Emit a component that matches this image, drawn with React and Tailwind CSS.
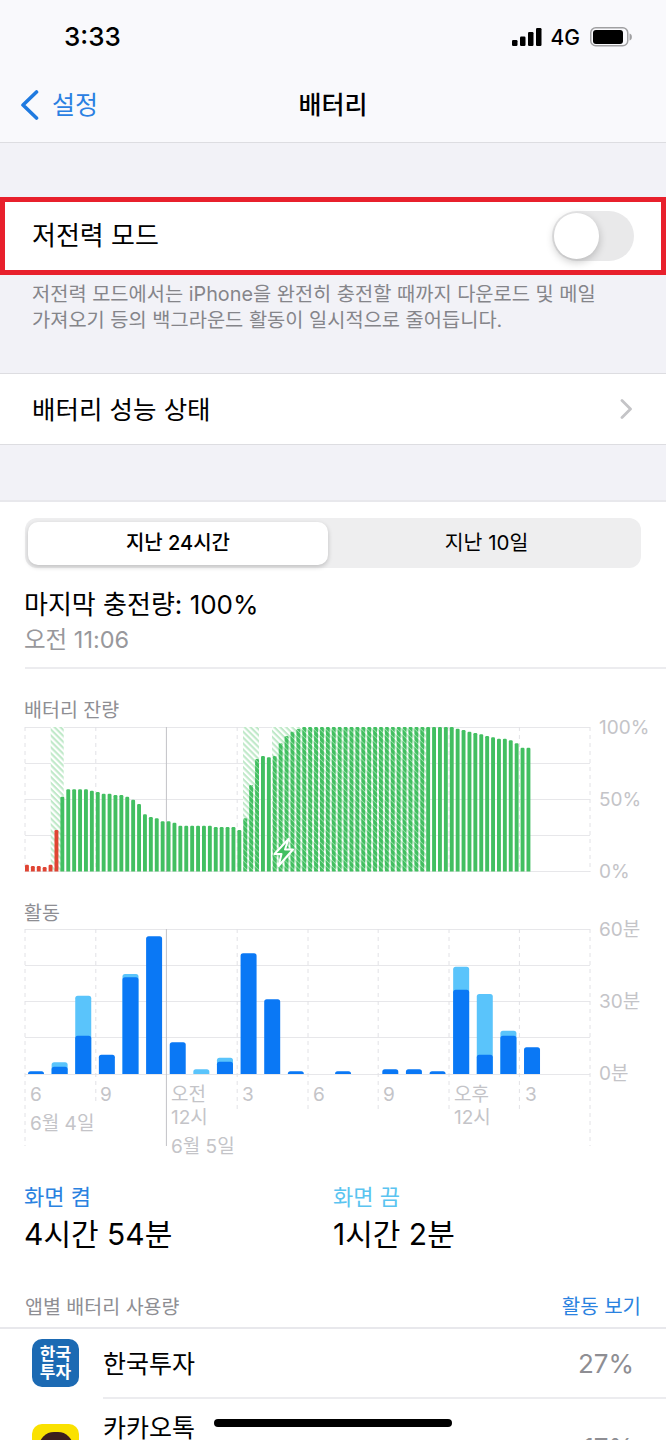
import React from 'react';

const FONT = "font-['Inter','Noto_Sans_CJK_KR',sans-serif]";

// x of the hour gridlines, shared by both charts
const HOUR_X = [25, 95.8, 166.4, 237.2, 308, 378.2, 449, 519.4, 590];

// top of each battery bar in page pixels (baseline is 871)
const BATTERY_TOPS = [
  864.7, 866, 866, 867, 864.7, 830, 796.7, 789.3, 789.3, 789.3, 789.3, 790.7, 792, 793.7, 793.7, 795, 795, 796.7,
  799.7, 804, 814.3, 817, 818.3, 821.3, 821.3, 822.7, 825.7, 825.7, 825.7, 825.7, 825.7, 825.7, 827, 827, 827, 827,
  830, 818.3, 785, 759, 756, 757.3, 756, 743.3, 736, 731.7, 729, 727, 727, 727, 727, 727, 727, 727, 727, 727, 727,
  727, 727, 727, 727, 727, 727, 727, 727, 727, 727, 727, 727, 727, 727, 727, 727, 728.7, 730, 731.7, 733, 734.3,
  736, 737.3, 738.7, 738.7, 740.3, 743.3, 747.7, 747.7,
];

// minutes drawn in page pixels: [top of dark bar, top of light bar]
const ACTIVITY = [
  [1071.3, null], [1066.7, 1062.3], [1035.7, 995.7], [1054.7, null], [977.3, 974], [936.3, null],
  [1042.3, null], [null, 1069.3], [1061.7, 1057.7], [953.3, null], [999.3, null], [1071.3, null],
  [null, null], [1071.3, null], [null, null], [1069.3, null], [1069.3, null], [1071.3, null],
  [989.7, 966.7], [1054.7, 994], [1035.7, 1030.7], [1047.3, null],
];

const topRounded = (x, y, w, bottom, r) =>
  `M${x} ${bottom}V${y + r}Q${x} ${y} ${x + r} ${y}H${x + w - r}Q${x + w} ${y} ${x + w} ${y + r}V${bottom}Z`;

const isCharging = (i) => (i >= 37 && i <= 39) || (i >= 42 && i <= 67);

const BatteryChart = () => (
  <svg className="block" width="666" height="155" viewBox="0 721 666 155">
    <defs>
      <pattern id="hatchBg" width="4.2" height="4.2" patternUnits="userSpaceOnUse" patternTransform="rotate(-45)">
        <rect width="4.2" height="4.2" fill="#c0e9c9" />
        <rect width="2.1" height="4.2" fill="#ffffff" />
      </pattern>
      <pattern id="hatchBar" width="4.2" height="4.2" patternUnits="userSpaceOnUse" patternTransform="rotate(-45)">
        <rect width="4.2" height="4.2" fill="#42bf61" />
        <rect width="0.7" height="4.2" fill="#a5e2b3" />
      </pattern>
    </defs>
    {[727, 763, 799, 835, 871].map((y) => (
      <line key={y} x1="25" x2="590" y1={y + 0.5} y2={y + 0.5} stroke="#e7e7ea" />
    ))}
    {HOUR_X.map((x, i) => (
      <line
        key={x}
        x1={x}
        x2={x}
        y1="727"
        y2="872"
        stroke={i === 2 ? '#c2c2c6' : '#e2e2e6'}
        strokeDasharray={i === 2 ? undefined : '4 4'}
      />
    ))}
    <rect x="50.7" y="727" width="13" height="144" fill="url(#hatchBg)" />
    <rect x="243" y="727" width="16" height="144" fill="url(#hatchBg)" />
    <rect x="272" y="727" width="154" height="144" fill="url(#hatchBg)" />
    {BATTERY_TOPS.map((top, i) => (
      <path
        key={i}
        d={topRounded(25 + i * 5.9, top, 3.9, 871.5, 1.2)}
        fill={i < 6 ? '#e04433' : isCharging(i) ? 'url(#hatchBar)' : '#42bf61'}
      />
    ))}
    <path
      d="M288.5 839 L274.5 854 L281.5 854 L278.5 866 L293 849.5 L285 849.5 Z"
      fill="#42bf61"
      stroke="#ffffff"
      strokeWidth="2"
      strokeLinejoin="round"
    />
  </svg>
);

const ActivityChart = () => (
  <svg className="block" width="666" height="226" viewBox="0 924 666 226">
    {[929, 965, 1001, 1037, 1074].map((y) => (
      <line key={y} x1="25" x2="590" y1={y + 0.5} y2={y + 0.5} stroke="#e7e7ea" />
    ))}
    {HOUR_X.map((x, i) => (
      <line
        key={x}
        x1={x}
        x2={x}
        y1="929"
        y2={i === 0 || i === 2 || i === 8 ? 1146 : i === 1 ? 1105 : 1110}
        stroke={i === 2 ? '#c2c2c6' : '#e2e2e6'}
        strokeDasharray={i === 2 ? undefined : '4 4'}
      />
    ))}
    {ACTIVITY.map(([dark, light], i) => {
      const x = 28 + i * 23.62;
      return (
        <g key={i}>
          {light && <path d={topRounded(x, light, 16, 1074, 2.5)} fill="#5ac4fb" />}
          {dark && <path d={topRounded(x, dark, 16, 1074, 2.5)} fill="#0a78f5" />}
        </g>
      );
    })}
  </svg>
);

const AxisLabel = ({ className, children }) => (
  <span className={`absolute text-[19px] leading-[24px] text-[#c4c4c8] whitespace-nowrap ${className}`}>{children}</span>
);

const App = () => {
  return (
    <div className={`relative h-[1440px] w-[666px] overflow-hidden bg-[#f2f2f7] text-black ${FONT}`}>
      {/* status bar + nav */}
      <header className="h-[143px] border-b border-[#dddde1] bg-[#f9f9fc]">
        <div className="flex h-[74px] items-center justify-between pl-[64px] pr-[34px]">
          <span className="text-[26px] font-medium leading-none">3:33</span>
          <div className="flex items-center">
            <svg width="30" height="18" viewBox="0 0 30 18">
              <rect x="0" y="12" width="5.5" height="6" rx="1.2" fill="#000" />
              <rect x="8" y="8.5" width="5.5" height="9.5" rx="1.2" fill="#000" />
              <rect x="16" y="4" width="5.5" height="14" rx="1.2" fill="#000" />
              <rect x="24" y="0" width="5.5" height="18" rx="1.2" fill="#000" />
            </svg>
            <span className="ml-[9px] text-[21px] font-medium leading-none">4G</span>
            <svg className="ml-[10px]" width="42" height="20" viewBox="0 0 42 20">
              <rect x="0.75" y="0.75" width="37" height="18" rx="5" fill="none" stroke="#a0a0a2" strokeWidth="1.5" />
              <rect x="3" y="3" width="30" height="14" rx="3" fill="#000" />
              <path d="M39.5 6.5c1.6.4 2.4 1.8 2.4 3.5s-.8 3.1-2.4 3.5z" fill="#a0a0a2" />
            </svg>
          </div>
        </div>
        <div className="grid h-[62px] grid-cols-3 items-center">
          <div className="flex items-center pl-[20px]">
            <svg width="19" height="30" viewBox="0 0 19 30">
              <path d="M16.5 2 L3 15 L16.5 28" fill="none" stroke="#1f7ae0" strokeWidth="3.6" strokeLinecap="round" strokeLinejoin="round" />
            </svg>
            <span className="ml-[13px] text-[25px] leading-none text-[#2a80e2]">설정</span>
          </div>
          <span className="text-center text-[25px] font-medium leading-none">배터리</span>
          <span />
        </div>
      </header>

      {/* low power mode */}
      <section className="mt-[54px]">
        <div className="flex h-[78px] items-center justify-between border-[5px] border-[#e8202c] bg-white pl-[27px] pr-[27px]">
          <span className="text-[26px] leading-none">저전력 모드</span>
          <div className="flex h-[50px] w-[82px] items-center rounded-full bg-[#e9e9ea] pl-[2px]">
            <div className="h-[46px] w-[45px] rounded-full bg-white shadow-[0_3px_8px_rgba(0,0,0,0.22)]" />
          </div>
        </div>
        <p className="px-[32px] pt-[6px] text-[19.8px] leading-[26px] text-[#85858a]">
          저전력 모드에서는 iPhone을 완전히 충전할 때까지 다운로드 및 메일
          <br />
          가져오기 등의 백그라운드 활동이 일시적으로 줄어듭니다.
        </p>
      </section>

      {/* battery health */}
      <div className="mt-[40px] flex h-[72px] items-center justify-between border-y border-[#dddde1] bg-white pl-[32px] pr-[34px]">
        <span className="pt-[2px] text-[25.5px] leading-none">배터리 성능 상태</span>
        <svg width="12" height="20" viewBox="0 0 12 20">
          <path d="M2 1.5 L10.5 10 L2 18.5" fill="none" stroke="#c4c4c7" strokeWidth="2.8" strokeLinecap="round" strokeLinejoin="round" />
        </svg>
      </div>

      {/* usage card */}
      <main className="mt-[55px] border-t-2 border-[#e8e8ec] bg-white pb-[100px]">
        <div className="pl-[25px] pt-[16px] pr-[25px]">
          <div className="flex h-[50px] items-center rounded-[12px] bg-[#eeeeef] px-[3px]">
            <div className="flex h-[43px] w-[300px] items-center justify-center rounded-[10px] bg-white text-[20px] font-medium leading-none shadow-[0_2px_5px_rgba(0,0,0,0.2)]">
              지난 24시간
            </div>
            <div className="flex h-[43px] flex-1 items-center justify-center pl-[7px] text-[20.5px] leading-none">
              지난 10일
            </div>
          </div>
        </div>

        <div className="ml-[25px] mt-[21px] border-b-2 border-[#ececef] pb-[11px]">
          <div className="-ml-px text-[26px] leading-[32px]">마지막 충전량: 100%</div>
          <div className="-ml-px mt-[3px] text-[23.5px] leading-[32px] text-[#98989c]">오전 11:06</div>
        </div>

        <div className="h-[52px] pl-[24px] pt-[29px] text-[19.5px] leading-[24px] text-[#8e8e93]">배터리 잔량</div>
        <div className="relative">
          <BatteryChart />
          <AxisLabel className="left-[599px] top-[-5px] text-[19.5px]">100%</AxisLabel>
          <AxisLabel className="left-[599px] top-[67px] text-[19.5px]">50%</AxisLabel>
          <AxisLabel className="left-[599px] top-[139px] text-[19.5px]">0%</AxisLabel>
        </div>

        <div className="mt-[24px] h-[24px] pl-[24px] pt-px text-[19.5px] leading-[24px] text-[#8e8e93]">활동</div>
        <div className="relative">
          <ActivityChart />
          <AxisLabel className="left-[599px] top-[-6px]">60분</AxisLabel>
          <AxisLabel className="left-[599px] top-[66px]">30분</AxisLabel>
          <AxisLabel className="left-[599px] top-[138px]">0분</AxisLabel>
          <AxisLabel className="left-[30px] top-[159px]">6</AxisLabel>
          <AxisLabel className="left-[100px] top-[159px]">9</AxisLabel>
          <AxisLabel className="left-[171px] top-[159px]">오전</AxisLabel>
          <AxisLabel className="left-[171px] top-[182px]">12시</AxisLabel>
          <AxisLabel className="left-[242px] top-[159px]">3</AxisLabel>
          <AxisLabel className="left-[313px] top-[159px]">6</AxisLabel>
          <AxisLabel className="left-[383px] top-[159px]">9</AxisLabel>
          <AxisLabel className="left-[454px] top-[159px]">오후</AxisLabel>
          <AxisLabel className="left-[454px] top-[182px]">12시</AxisLabel>
          <AxisLabel className="left-[525px] top-[159px]">3</AxisLabel>
          <AxisLabel className="left-[30px] top-[188px]">6월 4일</AxisLabel>
          <AxisLabel className="left-[171px] top-[211px]">6월 5일</AxisLabel>
        </div>

        <div className="mt-[35px] flex pl-[24px]">
          <div className="w-[309px]">
            <div className="text-[22px] leading-[24px] text-[#2a82e0]">화면 켬</div>
            <div className="mt-[5px] text-[30px] leading-[40px]">4시간 54분</div>
          </div>
          <div>
            <div className="text-[22px] leading-[24px] text-[#5ac4f0]">화면 끔</div>
            <div className="mt-[5px] text-[30px] leading-[40px]">1시간 2분</div>
          </div>
        </div>

        <div className="mt-[41px] flex items-center justify-between pl-[25px] pr-[25px] pb-[8px]">
          <span className="text-[19.5px] leading-[24px] text-[#8e8e93]">앱별 배터리 사용량</span>
          <span className="text-[20px] leading-[24px] text-[#2a82e0]">활동 보기</span>
        </div>

        <div className="border-t-2 border-[#e8e8ec]">
          <div className="flex h-[68px] items-center pl-[32px] pr-[32px]">
            <div className="flex h-[48px] w-[47px] items-center justify-center rounded-[10px] bg-[#1c6ab3] text-center text-[17px] font-bold leading-[18px] text-white">
              한국
              <br />
              투자
            </div>
            <span className="ml-[24px] pt-[2px] text-[25px] leading-none">한국투자</span>
            <span className="ml-auto pt-[2px] text-[26px] leading-none text-[#8e8e93]">27%</span>
          </div>
          <div className="ml-[103px] border-t-2 border-[#ececef]" />
          <div className="flex h-[98px] items-center pl-[32px] pr-[32px]">
            <div className="flex h-[48px] w-[47px] justify-center overflow-hidden rounded-[10px] bg-[#fae100] pt-[8px]">
              <div className="h-[30px] w-[34px] rounded-full bg-[#3c1e1e]" />
            </div>
            <span className="ml-[24px] self-start pt-[17px] text-[25px] leading-none">카카오톡</span>
            <span className="ml-auto text-[26px] leading-none text-[#8e8e93]">17%</span>
          </div>
        </div>
      </main>

      {/* home indicator */}
      <div className="absolute left-[214px] top-[1419px] h-[8px] w-[238px] rounded-full bg-black" />
    </div>
  );
};

export default App;
